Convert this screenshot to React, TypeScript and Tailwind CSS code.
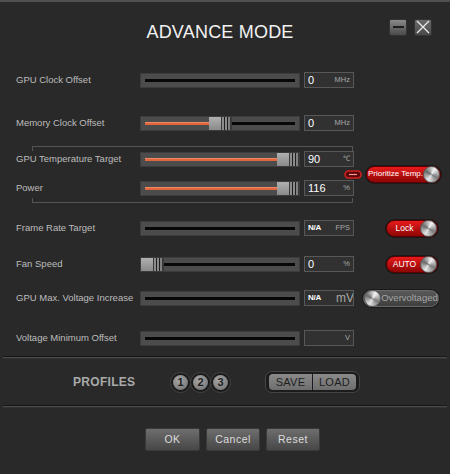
import React from "react";

const knob =
  "w-[17px] h-[17px] shrink-0 rounded-full border border-[#5a5a5a] bg-[conic-gradient(from_30deg,#f4f4f4,#7a7a7a,#e6e6e6,#6a6a6a,#f4f4f4)]";

function Slider({ thumb }: { thumb?: number }) {
  const hasThumb = thumb !== undefined;
  return (
    <div className="relative w-[160px] h-[15px] shrink-0 bg-[#4c4c4c] border border-[#3c3c3c]">
      <div className="absolute left-[4px] right-[4px] top-[5px] h-[3px] bg-[#080808]" />
      {hasThumb && thumb! > 4 && (
        <div
          className="absolute left-[4px] top-[5px] h-[3px] bg-[#e2663d] border-t border-[#f08a66]"
          style={{ width: thumb! - 4 }}
        />
      )}
      {hasThumb && (
        <div className="absolute top-[0px] h-[13px] flex" style={{ left: thumb }}>
          <div className="w-[12px] h-full bg-gradient-to-b from-[#b0b0b0] to-[#8a8a8a]" />
          <div className="w-[1px] h-full bg-[#3a3a3a]" />
          <div className="w-[2px] h-full bg-[#8c8c8c]" />
          <div className="w-[1px] h-full bg-[#1e1e1e]" />
          <div className="w-[2px] h-full bg-[#8c8c8c]" />
          <div className="w-[1px] h-full bg-[#1e1e1e]" />
          <div className="w-[2px] h-full bg-[#808080]" />
          <div className="w-[2px] h-full bg-[#3a3a3a]" />
        </div>
      )}
    </div>
  );
}

function ValueBox({ value, unit, na, big }: { value?: string; unit: string; na?: boolean; big?: boolean }) {
  return (
    <div className="ml-[4px] w-[50px] h-[16px] shrink-0 bg-[#313131] border border-[#585858] flex items-center justify-between pl-[3px] pr-[3px] overflow-hidden">
      {na ? (
        <span className="text-[8px] font-bold text-white tracking-[-0.3px]">N/A</span>
      ) : (
        <span className="text-[11px] text-white leading-none">{value}</span>
      )}
      <span
        className={
          big
            ? "text-[12px] text-[#a8a8a8] leading-none mr-[-4px]"
            : "text-[7.5px] text-[#a8a8a8] leading-none"
        }
      >
        {unit}
      </span>
    </div>
  );
}

function RedToggle({ label, w, small }: { label: string; w: string; small?: boolean }) {
  return (
    <div className={`${w} h-[19px] rounded-full bg-[#1a1a1a] p-[1px] flex`}>
      <div className="flex-1 rounded-full bg-gradient-to-b from-[#e81a1a] to-[#8e0606] border border-[#5a0000] flex items-center">
        <span
          className={`flex-1 text-center text-white leading-none whitespace-nowrap ${
            small ? "text-[8px] pl-[1px]" : "text-[8.5px] pl-[2px]"
          }`}
        >
          {label}
        </span>
        <div className={knob} />
      </div>
    </div>
  );
}

function Row({
  label,
  thumb,
  value,
  unit,
  na,
  big,
  right,
}: {
  label: string;
  thumb?: number;
  value?: string;
  unit: string;
  na?: boolean;
  big?: boolean;
  right?: React.ReactNode;
}) {
  return (
    <div className="flex items-center h-[16px]">
      <div className="w-[140px] shrink-0 pl-[16px] text-[9.5px] text-[#bdbdbd] whitespace-nowrap">{label}</div>
      <Slider thumb={thumb} />
      <ValueBox value={value} unit={unit} na={na} big={big} />
      <div className="flex-1 flex justify-end pr-[11px]">{right}</div>
    </div>
  );
}

function Divider() {
  return <div className="mx-[3px] h-[3px] border-t border-[#171717] bg-[#4a4a4a] border-b border-b-[#333]" />;
}

function Circle({ n }: { n: number }) {
  return (
    <div className="w-[21px] h-[21px] -ml-[1px] first:ml-0 rounded-full bg-[#1a1a1a] border border-[#444] flex items-center justify-center">
      <div className="w-[15px] h-[15px] rounded-full bg-[radial-gradient(circle_at_40%_35%,#a8a8a8,#6a6a6a)] flex items-center justify-center text-[11px] font-bold text-[#1e1e1e] leading-none">
        {n}
      </div>
    </div>
  );
}

function Btn({ label, w }: { label: string; w: string }) {
  return (
    <div
      className={`${w} h-[23px] rounded-[2px] border border-[#3a3a3a] bg-gradient-to-b from-[#6e6e6e] to-[#474747] flex items-center justify-center text-[10.5px] text-[#dcdcdc] tracking-[0.5px]`}
    >
      {label}
    </div>
  );
}

export default function App() {
  return (
    <div className="w-[450px] h-[474px] bg-[#292929] border-t-2 border-[#505050] flex flex-col font-['Liberation_Sans',Arial,sans-serif] overflow-hidden">
      {/* header */}
      <div className="h-[58px] flex items-center">
        <div className="w-[138px]" />
        <div className="w-[164px] text-center text-[18px] text-[#f2f2f2] tracking-[0.2px] mt-[2px]">ADVANCE MODE</div>
        <div className="flex-1 flex justify-end gap-[7px] pr-[18px] mt-[-8px]">
          <div className="w-[18px] h-[17px] rounded-[2px] bg-gradient-to-b from-[#8a8a8a] to-[#4a4a4a] border border-[#333] flex items-center justify-center">
            <div className="w-[11px] h-[1.5px] bg-[#1e1e1e]" />
          </div>
          <div className="w-[18px] h-[17px] rounded-[2px] bg-gradient-to-b from-[#6a6a6a] to-[#4a4a4a] border border-[#333] flex items-center justify-center">
            <svg width="14" height="14" viewBox="0 0 14 14">
              <path d="M1 1 L13 13 M13 1 L1 13" stroke="#e8e8e8" strokeWidth="1.3" />
            </svg>
          </div>
        </div>
      </div>

      <div className="mt-[12px]">
        <Row label="GPU Clock Offset" value="0" unit="MHz" />
      </div>
      <div className="mt-[27px]">
        <Row label="Memory Clock Offset" thumb={68} value="0" unit="MHz" />
      </div>

      {/* temperature / power group */}
      <div className="mt-[15px] ml-[32px] w-[321px] h-[5px] border-t border-x border-[#555]" />
      <div className="flex">
        <div className="w-[354px] shrink-0">
          <Row label="GPU Temperature Target" thumb={136} value="90" unit="℃" />
          <div className="mt-[13px]">
            <Row label="Power" thumb={136} value="116" unit="%" />
          </div>
        </div>
        <div className="flex items-center -ml-[10px] gap-[3px] mt-[1px]">
          <svg width="18" height="9" viewBox="0 0 18 9">
            <rect x="1" y="1" width="16" height="7" rx="3.5" fill="#5a0808" stroke="#d42020" strokeWidth="1.6" />
            <path d="M5 4.5 H13" stroke="#ff9a9a" strokeWidth="1.2" />
          </svg>
          <RedToggle label="Prioritize Temp." w="w-[77px]" small />
        </div>
      </div>
      <div className="mt-[2px] ml-[32px] w-[321px] h-[5px] border-b border-x border-[#555]" />

      <div className="mt-[17px]">
        <Row label="Frame Rate Target" na unit="FPS" right={<RedToggle label="Lock" w="w-[54px]" />} />
      </div>
      <div className="mt-[20px]">
        <Row label="Fan Speed" thumb={0} value="0" unit="%" right={<RedToggle label="AUTO" w="w-[54px]" />} />
      </div>
      <div className="mt-[18px]">
        <Row
          label="GPU Max. Voltage Increase"
          na
          unit="mV"
          big
          right={
            <div className="w-[78px] h-[19px] rounded-full bg-[#1a1a1a] p-[1px] flex mr-[-1px]">
              <div className="flex-1 rounded-full bg-gradient-to-b from-[#5a5a5a] to-[#3e3e3e] border border-[#6a6a6a] flex items-center">
                <div className={knob} />
                <span className="flex-1 text-center text-[9.5px] text-[#a5a5a5] leading-none">Overvoltaged</span>
              </div>
            </div>
          }
        />
      </div>
      <div className="mt-[24px]">
        <Row label="Voltage Minimum Offset" value="" unit="V" />
      </div>

      <div className="mt-[10px]">
        <Divider />
      </div>

      {/* profiles */}
      <div className="h-[46px] flex items-center pl-[73px]">
        <div className="w-[62px] text-[12px] font-bold text-[#a9a9a9] tracking-[0.3px] whitespace-nowrap">PROFILES</div>
        <div className="ml-[35px] flex">
          <Circle n={1} />
          <Circle n={2} />
          <Circle n={3} />
        </div>
        <div className="ml-[34px] w-[95px] h-[22px] rounded-[7px] bg-[#1c1c1c] border border-[#454545] flex items-center px-[3px] gap-[1px]">
          <div className="flex-1 h-[16px] rounded-l-[4px] bg-gradient-to-b from-[#8a8a8a] to-[#6e6e6e] flex items-center justify-center text-[11px] text-[#1e1e1e] tracking-[0.3px]">
            SAVE
          </div>
          <div className="flex-1 h-[16px] rounded-r-[4px] bg-gradient-to-b from-[#8a8a8a] to-[#6e6e6e] flex items-center justify-center text-[11px] text-[#1e1e1e] tracking-[0.3px]">
            LOAD
          </div>
        </div>
      </div>

      <Divider />

      <div className="mt-[20px] flex justify-center gap-[6px] pl-[15px]">
        <Btn label="OK" w="w-[55px]" />
        <Btn label="Cancel" w="w-[54px]" />
        <Btn label="Reset" w="w-[54px]" />
      </div>
    </div>
  );
}
